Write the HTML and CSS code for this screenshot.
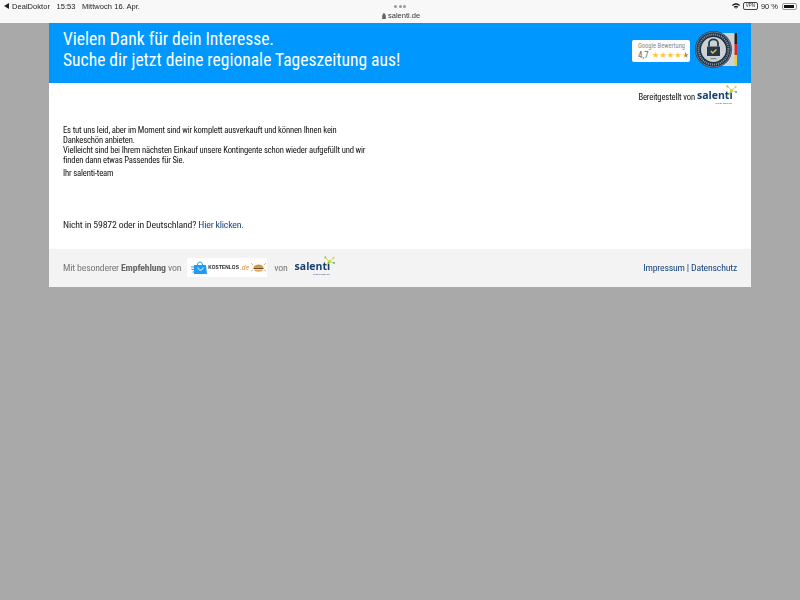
FILE: index.html
```html
<!DOCTYPE html>
<html lang="de">
<head>
<meta charset="utf-8">
<title>salenti.de</title>
<link rel="stylesheet" href="styles.css">
</head>
<body>
<div class="statusbar">
  <div class="status-row">
    <div class="status-left">
      <span class="status-item"><svg class="back-tri" width="5" height="6" viewBox="0 0 5 6"><path d="M0 3 5 0V6Z" fill="#222"/></svg>DealDoktor</span>
      <span>15:53</span>
      <span>Mittwoch 16. Apr.</span>
    </div>
    <div class="status-right">
      <svg class="wifi" width="8" height="6" viewBox="0 0 10 7"><path d="M0 2.4C2.8-.6 7.2-.6 10 2.4L8.9 3.5C6.7 1.3 3.3 1.3 1.1 3.5ZM2.1 4.5C3.7 2.9 6.3 2.9 7.9 4.5L6.8 5.6C5.8 4.7 4.2 4.7 3.2 5.6ZM4 6.1C4.6 5.7 5.4 5.7 6 6.1L5 7Z" fill="#222"/></svg>
      <span class="vpn">VPN</span>
      <span>90 %</span>
      <span class="battery"><span class="battery-fill"></span></span>
    </div>
  </div>
  <div class="dots"><i></i><i></i><i></i></div>
  <div class="url"><svg width="4" height="6" viewBox="0 0 4 6"><path d="M.3 2.5H3.7V6H.3ZM1 2.5V1.4C1 .1 3 .1 3 1.4V2.5" fill="#666" stroke="#666" stroke-width=".5"/></svg>salenti.de</div>
</div>

<main class="card">
  <header class="hero">
    <h1 class="hero-title">Vielen Dank für dein Interesse.<br>Suche dir jetzt deine regionale Tageszeitung aus!</h1>
    <div class="badges">
      <div class="rating">
        <div class="rating-label">Google Bewertung</div>
        <div class="rating-row"><span class="rating-value">4,7</span><span class="stars">★★★★<span class="star-half">★</span></span></div>
      </div>
      <div class="seal">
        <svg width="42" height="37" viewBox="0 0 42 37">
          <rect x="19" y="2" width="23" height="33" fill="#cfd3d6"/>
          <rect x="39.500" y="2" width="2.500" height="11" fill="#222"/>
          <rect x="39.500" y="13" width="2.500" height="11" fill="#d8262c"/>
          <rect x="39.500" y="24" width="2.500" height="11" fill="#f2c92f"/>
          <circle cx="18.500" cy="18.500" r="18.500" fill="#1f3245"/>
          <circle cx="18.500" cy="18.500" r="17.500" fill="none" stroke="#9fb0bd" stroke-width=".6"/>
          <circle cx="18.500" cy="18.500" r="15" fill="none" stroke="#8c99a5" stroke-width="2" stroke-dasharray="1 1"/>
          <circle cx="18.500" cy="18.500" r="12.500" fill="#cdd1d4"/>
          <path d="M14 15.500V12.500C14 7 23 7 23 12.500V15.500" fill="none" stroke="#26394b" stroke-width="1.800"/>
          <rect x="12" y="15.500" width="13" height="9.500" rx=".6" fill="#26394b"/>
          <path d="M15.800 20 17.800 22 21.500 18.500" fill="none" stroke="#f4c52c" stroke-width="1.300"/>
          <rect x="15.500" y="27" width="6" height="1.200" fill="#7e8a94"/>
        </svg>
      </div>
    </div>
  </header>

  <section class="content">
    <div class="provided">
      <span>Bereitgestellt von</span>
      <span class="salenti"><span class="salenti-word">salenti</span><span class="salenti-sub">hyper-lokal.de</span><svg class="salenti-spark" width="11" height="11" viewBox="0 0 12 12"><g stroke="#a7c93a" stroke-width=".8"><path d="M6 6 1.500 1.500M6 6 10.500 2M6 6 11 7.500M6 6 3 10"/></g><circle cx="6" cy="6" r="1.500" fill="#e0d21f"/><circle cx="1.500" cy="1.500" r="1.200" fill="#a7c93a"/><circle cx="10.500" cy="2" r="1.200" fill="#f0d82a"/><circle cx="11" cy="7.500" r="1" fill="#39a8a0"/><circle cx="3" cy="10" r="1" fill="#a7c93a"/></svg></span>
    </div>
    <div class="message">
      <p>Es tut uns leid, aber im Moment sind wir komplett ausverkauft und können Ihnen kein<br>Dankeschön anbieten.<br>Vielleicht sind bei Ihrem nächsten Einkauf unsere Kontingente schon wieder aufgefüllt und wir<br>finden dann etwas Passendes für Sie.</p>
      <p class="sign">Ihr salenti-team</p>
    </div>
    <p class="location">Nicht in 59872 oder in Deutschland? <a href="#">Hier klicken.</a></p>
  </section>

  <footer class="foot">
    <div class="foot-left">
      <span class="recommend">Mit besonderer <b>Empfehlung</b> von</span>
      <span class="kostenlos">
        <svg width="16" height="13" viewBox="0 0 16 13"><path d="M3 4H15L16 13H3Z" fill="#1d9bf0"/><path d="M6.500 4C6.500 0 11.500 0 11.500 4" fill="none" stroke="#1d9bf0" stroke-width="1"/><path d="M7 6.500C7 10 12 10 12 6.500" fill="none" stroke="#fff" stroke-width="1"/><path d="M0 6H3M.5 8.500H3M1.500 11H3" stroke="#1d9bf0" stroke-width="1"/></svg>
        <span class="k-word">KOSTENLOS</span><span class="k-de">.de</span>
        <svg width="15" height="11" viewBox="0 0 15 11"><path d="M3 5C3 1.500 12 1.500 12 5Z" fill="#c9964a"/><rect x="2.500" y="5.500" width="10" height="1.500" fill="#6b4a2a"/><path d="M3 7.500H12C12 10.500 3 10.500 3 7.500Z" fill="#d9a95c"/><path d="M0 1 2 3M15 1 13 3M0 9 2 8M15 9 13 8" stroke="#d9a95c" stroke-width=".8"/></svg>
      </span>
      <span class="von">von</span>
      <span class="salenti salenti-large"><span class="salenti-word">salenti</span><span class="salenti-sub">hyper-lokal.de</span><svg class="salenti-spark" width="11" height="11" viewBox="0 0 12 12"><g stroke="#a7c93a" stroke-width=".8"><path d="M6 6 1.500 1.500M6 6 10.500 2M6 6 11 7.500M6 6 3 10"/></g><circle cx="6" cy="6" r="1.500" fill="#e0d21f"/><circle cx="1.500" cy="1.500" r="1.200" fill="#a7c93a"/><circle cx="10.500" cy="2" r="1.200" fill="#f0d82a"/><circle cx="11" cy="7.500" r="1" fill="#39a8a0"/><circle cx="3" cy="10" r="1" fill="#a7c93a"/></svg></span>
    </div>
    <nav class="foot-links"><a href="#">Impressum</a> | <a href="#">Datenschutz</a></nav>
  </footer>
</main>
</body>
</html>
```
FILE: styles.css
```css
* { box-sizing: border-box; }
html, body { margin: 0; height: 100%; }
body {
  background: #a9a9a9;
  font-family: Roboto, "Liberation Sans", sans-serif;
  font-stretch: 75%;
  color: #111;
  overflow: hidden;
}
p { margin: 0; }
a { color: #17457f; text-decoration: none; }

.statusbar {
  position: relative;
  height: 23px;
  background: #f8f8f8;
  font-family: "Liberation Sans", sans-serif;
  font-stretch: normal;
  font-size: 7.5px;
  color: #222;
}
.status-row {
  display: flex;
  justify-content: space-between;
  align-items: center;
  height: 12px;
  padding: 0 3px 0 4px;
}
.status-left { display: flex; gap: 6.500px; letter-spacing: .05px; will-change: opacity; }
.status-item { display: flex; align-items: center; gap: 3px; }
.status-right { display: flex; align-items: center; gap: 3px; will-change: opacity; }
.vpn {
  border: 1px solid #444;
  border-radius: 2px;
  font-size: 4.500px;
  line-height: 6px;
  padding: 0 2px;
}
.battery {
  display: block;
  width: 15px;
  height: 7px;
  margin-left: 1px;
  padding: 1px;
  border: 1px solid #999;
  border-radius: 2px;
}
.battery-fill { display: block; width: 90%; height: 100%; background: #111; }
.dots {
  position: absolute;
  top: 5px;
  left: 394px;
  display: flex;
  gap: 1.500px;
}
.dots i { width: 3px; height: 3px; border-radius: 50%; background: #999; }
.url {
  position: absolute;
  top: 11px;
  left: 382px;
  display: flex;
  align-items: center;
  gap: 2px;
  font-size: 7.500px;
  line-height: 10px;
  color: #333;
  will-change: opacity;
}

.card {
  width: 702px;
  margin-left: 49px;
  background: #fff;
}
.hero {
  display: flex;
  justify-content: space-between;
  align-items: center;
  height: 60px;
  padding: 0 14px 7px;
  background: #0098ff;
}
.hero-title {
  margin: 0;
  font-size: 17.550px;
  line-height: 21px;
  font-weight: 400;
  color: #fff;
}
.badges { display: flex; align-items: center; gap: 5px; }
.rating {
  width: 58px;
  height: 22px;
  margin-top: 3px;
  padding: 2px 0 0 6px;
  background: #fff;
  border-radius: 2px;
}
.rating-label {
  font-size: 6.500px;
  line-height: 8px;
  color: #888;
  white-space: nowrap;
}
.rating-row { display: flex; align-items: center; gap: 3px; height: 10px; }
.rating-value { font-size: 9px; line-height: 10px; color: #666; }
.stars {
  font-family: "DejaVu Sans", sans-serif;
  font-stretch: normal;
  font-size: 8.500px;
  line-height: 10px;
  letter-spacing: -.1px;
  color: #fbc93d;
}
.star-half {
  background: linear-gradient(90deg, #fbc93d 50%, #8a8a8a 50%);
  -webkit-background-clip: text;
  background-clip: text;
  color: transparent;
}
.seal { display: flex; }

.content { height: 166px; padding: 0 14px; }
.provided {
  display: flex;
  justify-content: flex-end;
  align-items: center;
  gap: 2px;
  height: 25px;
  padding-top: 2px;
  font-size: 8.600px;
  letter-spacing: -.14px;
  will-change: opacity;
}
.salenti {
  position: relative;
  display: inline-block;
  width: 40px;
  padding-top: 2px;
  font-family: "Open Sans", sans-serif;
  font-stretch: normal;
  letter-spacing: 0;
}
.salenti-word {
  display: block;
  font-size: 10.500px;
  line-height: 10px;
  font-weight: 700;
  color: #17406f;
}
.salenti-sub {
  display: block;
  margin-top: 2px;
  padding-right: 5px;
  text-align: right;
  font-size: 2.500px;
  line-height: 3px;
  color: #17406f;
}
.salenti-spark { position: absolute; top: -3px; right: 0; }
.message {
  margin-top: 17px;
  font-size: 8.600px;
  letter-spacing: -.16px;
  line-height: 10px;
  will-change: opacity;
}
.sign { margin-top: 3px; }
.location {
  margin-top: 40px;
  font-size: 9.800px;
  letter-spacing: -.18px;
  line-height: 14px;
  color: #222;
  will-change: opacity;
}

.foot {
  display: flex;
  justify-content: space-between;
  align-items: center;
  height: 38px;
  padding: 0 14px 2px;
  background: #f3f3f3;
}
.foot-left { display: flex; align-items: center; will-change: opacity; }
.recommend { font-size: 9.800px; letter-spacing: -.17px; color: #777; white-space: nowrap; }
.recommend b { color: #666; }
.kostenlos {
  display: flex;
  align-items: center;
  gap: 1px;
  width: 80px;
  height: 19px;
  margin-left: 6px;
  padding-left: 4px;
  background: #fff;
}
.k-word {
  font-family: "Liberation Sans", sans-serif;
  font-stretch: normal;
  font-size: 4.800px;
  font-weight: 700;
  letter-spacing: .1px;
  color: #222;
}
.k-de {
  margin-right: 1px;
  font-family: "Liberation Sans", sans-serif;
  font-stretch: normal;
  font-size: 6.500px;
  font-style: italic;
  color: #e8912d;
}
.von { margin-left: 7px; font-size: 9.800px; letter-spacing: -.14px; color: #777; }
.salenti-large { margin-left: 7px; }
.foot-links { font-size: 9.800px; letter-spacing: -.2px; color: #17457f; will-change: opacity; }
```
